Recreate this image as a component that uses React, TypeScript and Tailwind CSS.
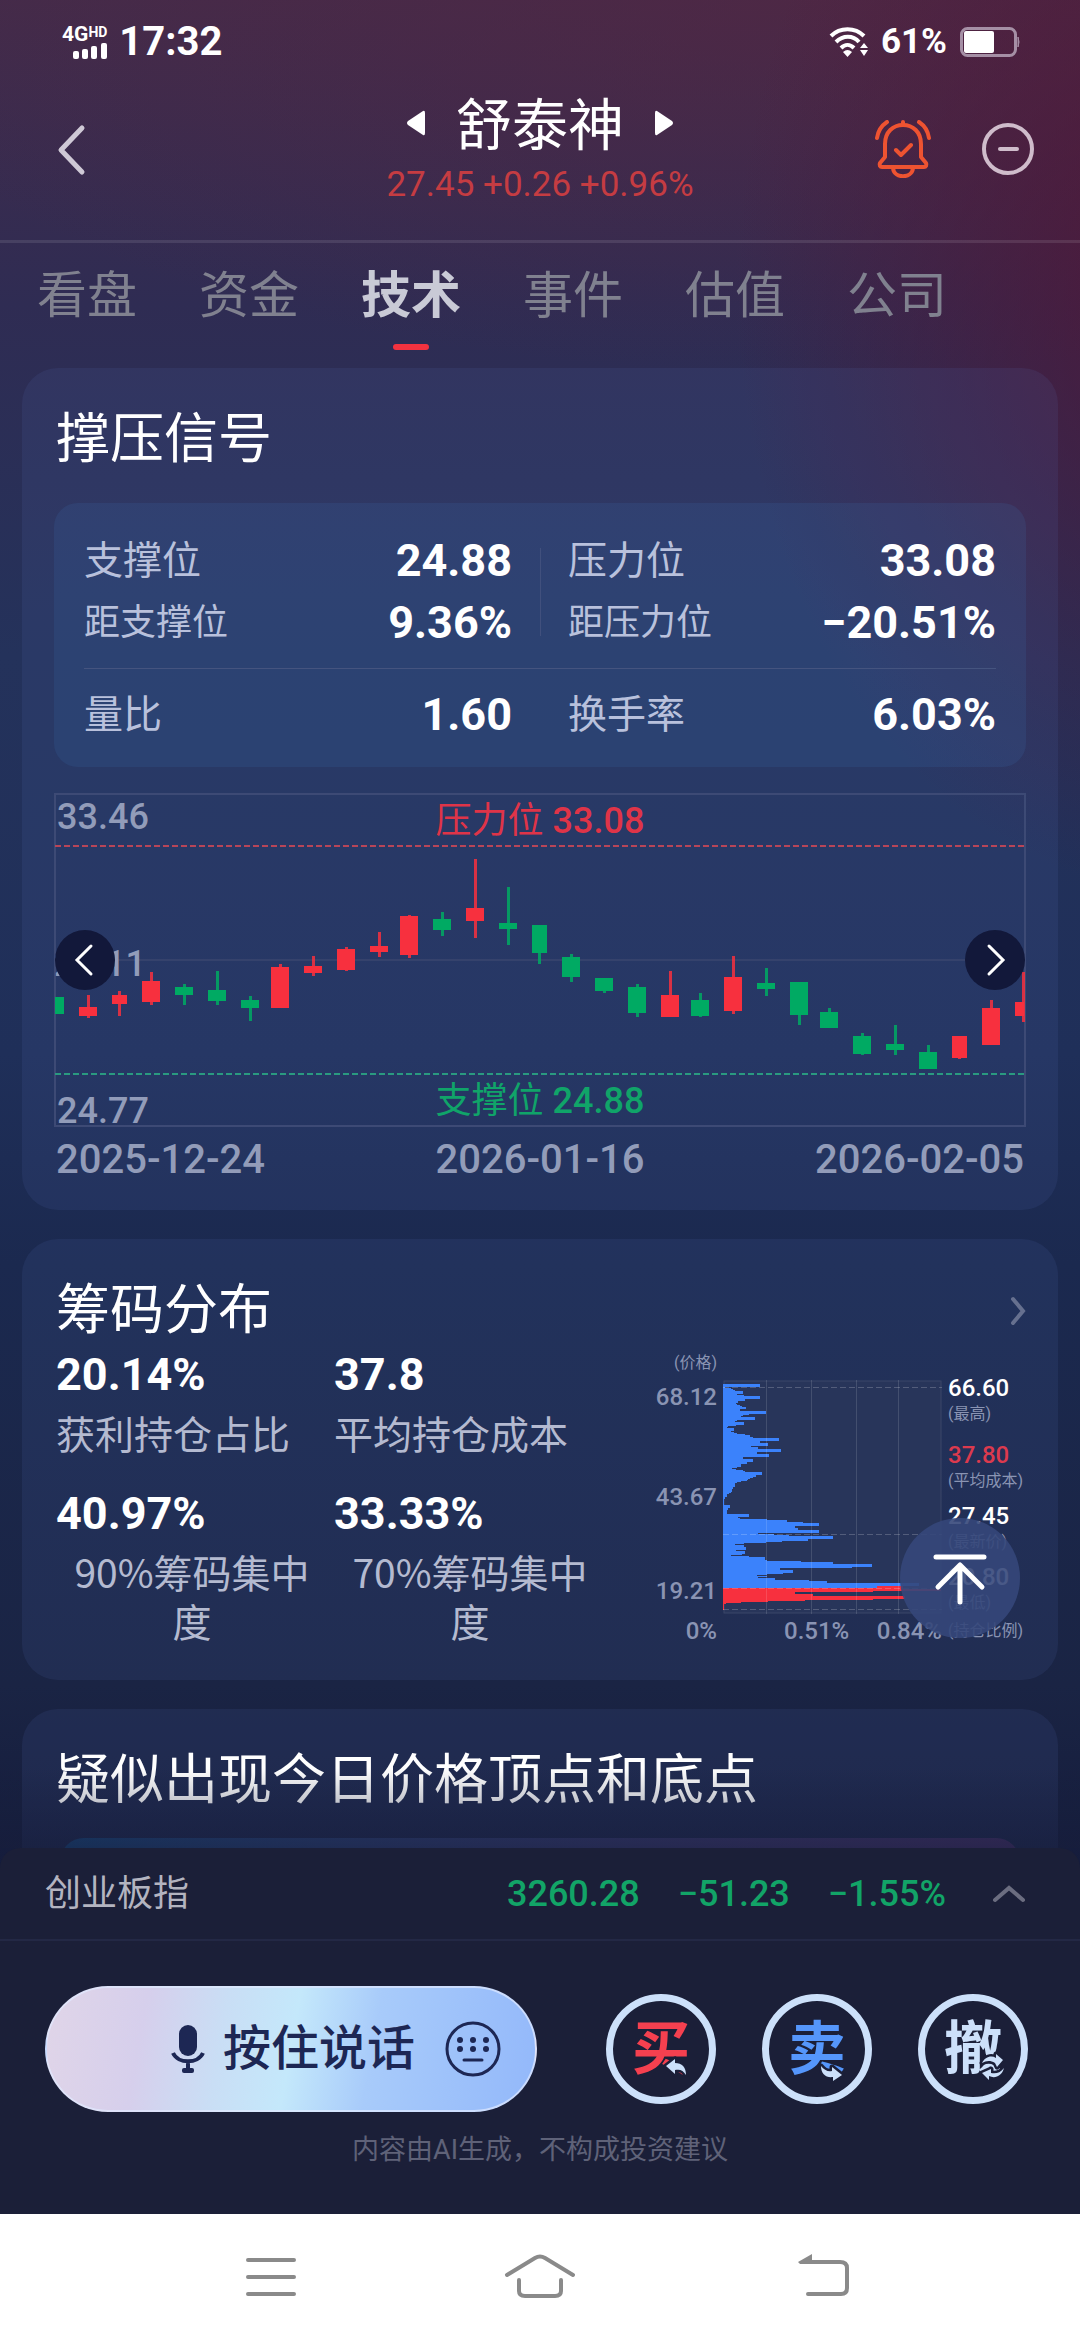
import React, { useState } from "react";

const RED = "#f7303e";
const GREEN = "#00aa63";

const tabs = ["看盘", "资金", "技术", "事件", "估值", "公司"];

// x, width, body top, body bottom, high, low, up
type Candle = [number, number, number, number, number, number, boolean];

const candles: Candle[] = [
  [1, 9, 204, 221, 204, 221, false],
  [25, 18, 214, 223, 202, 225, true],
  [58, 15, 202, 211, 198, 223, true],
  [88, 18, 188, 209, 179, 212, true],
  [121, 18, 194, 202, 191, 212, false],
  [154, 18, 197, 208, 178, 212, false],
  [187, 18, 207, 215, 203, 228, false],
  [217, 18, 174, 215, 171, 215, true],
  [250, 18, 173, 180, 163, 183, true],
  [283, 18, 156, 177, 154, 178, true],
  [316, 18, 153, 159, 139, 164, true],
  [346, 18, 123, 162, 122, 165, true],
  [379, 18, 126, 137, 119, 143, false],
  [412, 18, 115, 128, 66, 145, true],
  [445, 18, 130, 136, 94, 152, false],
  [478, 15, 132, 160, 132, 171, false],
  [508, 18, 164, 184, 161, 189, false],
  [541, 18, 185, 198, 185, 200, false],
  [574, 18, 194, 220, 191, 224, false],
  [607, 18, 202, 224, 178, 224, true],
  [637, 18, 207, 223, 200, 224, false],
  [670, 18, 184, 218, 163, 221, true],
  [703, 18, 190, 196, 175, 203, false],
  [736, 18, 189, 222, 189, 232, false],
  [766, 18, 219, 235, 215, 235, false],
  [799, 18, 243, 261, 240, 262, false],
  [832, 18, 251, 257, 232, 262, false],
  [865, 18, 259, 276, 252, 276, false],
  [898, 15, 243, 265, 243, 266, true],
  [928, 18, 215, 252, 207, 252, true],
  [961, 9, 209, 223, 179, 229, true],
];

// y, width of the bar that ends at that y
const chipsAbove: [number, number][] = [
  [4, 37], [7, 2], [8, 8], [9, 10], [10, 12], [11, 20], [14, 14], [15, 21],
  [16, 37], [19, 22], [21, 15], [23, 13], [24, 14], [25, 17], [26, 19],
  [27, 23], [29, 17], [31, 43], [34, 26], [35, 20], [36, 18], [37, 32],
  [40, 14], [41, 12], [42, 21], [45, 13], [46, 5], [47, 4], [48, 11],
  [51, 8], [52, 11], [53, 14], [54, 22], [55, 27], [57, 30], [58, 56],
  [61, 37], [63, 45], [66, 28], [67, 35], [69, 58], [72, 34], [74, 46],
  [77, 20], [79, 30], [82, 24], [84, 18], [87, 14], [88, 9], [89, 13],
  [90, 20], [91, 22], [92, 39], [95, 33], [97, 30], [98, 27], [99, 25],
  [100, 24], [101, 18], [102, 14], [103, 12], [107, 10], [109, 9], [112, 8],
  [113, 6], [114, 4], [117, 2], [119, 1], [125, 7], [128, 5], [130, 4],
  [134, 26], [137, 15], [138, 17], [139, 44], [140, 64], [142, 80],
  [143, 96], [146, 72], [148, 75], [150, 96], [153, 35], [154, 51],
  [155, 66], [156, 110], [159, 85], [161, 59], [162, 43], [163, 21],
  [164, 12], [165, 21], [167, 23], [170, 13], [171, 22], [174, 19],
  [175, 8], [176, 26], [177, 42], [180, 44], [181, 78], [182, 110],
  [184, 149], [187, 129], [188, 57], [190, 70], [193, 60], [194, 44],
  [195, 34], [196, 44], [197, 35], [198, 52], [200, 86], [201, 104],
  [203, 196], [206, 154], [208, 0],
];

const chipsBelow: [number, number][] = [
  [208, 179], [209, 218], [211, 150], [212, 72], [214, 90], [216, 182],
  [219, 150], [220, 82], [221, 45], [222, 18], [223, 3], [224, 1], [230, 0],
];

const steps = (rows: [number, number][]) =>
  `M0 ${rows[0][0]}` + rows.map(([y, w]) => `V${y}H${w}`).join("") + "H0Z";

const chipStats = [
  { value: "20.14%", label: "获利持仓占比" },
  { value: "37.8", label: "平均持仓成本" },
  { value: "40.97%", label: "90%筹码集中度" },
  { value: "33.33%", label: "70%筹码集中度" },
];

const StatusBar = () => (
  <div className="flex h-[84px] items-center justify-between pr-[60px] pl-[62px] font-bold">
    <div className="flex items-center gap-3">
      <div className="flex flex-col items-end">
        <div className="flex items-start text-[21px] leading-[17px]">
          4G<span className="text-sm leading-3">HD</span>
        </div>
        <svg viewBox="0 0 34 16" className="h-4 w-[34px] fill-white">
          <rect x="0" y="8" width="6" height="8" rx="2" />
          <rect x="9" y="6" width="6" height="10" rx="2" />
          <rect x="18" y="3" width="6" height="13" rx="2" />
          <rect x="28" y="0" width="6" height="16" rx="2" />
        </svg>
      </div>
      <span className="text-[40px]">17:32</span>
    </div>
    <div className="flex items-center gap-[13px]">
      <svg viewBox="0 0 39 30" className="h-[30px] w-[39px]">
        <g fill="none" stroke="#fff" strokeWidth="4">
          <path d="M2 9C11 0 26 0 35 9" />
          <path d="M7 15C14 8 24 8 30 15" />
          <path d="M12 21C16 17 21 17 25 21" />
        </g>
        <path d="M14 25Q18.500 21 23 25L18.500 30Z" fill="#fff" />
        <path d="M31 21L35 16L39 21ZM31 23H39L35 29Z" fill="#fff" />
      </svg>
      <span className="text-[35px]">61%</span>
      <svg viewBox="0 0 60 30" className="h-[30px] w-[60px]">
        <rect x="1.500" y="1.500" width="54" height="27" rx="6" fill="none" stroke="#a58fa5" strokeWidth="3" />
        <rect x="4" y="4" width="30" height="22" rx="2" fill="#fff" />
        <path d="M58 10Q60 15 58 20Z" fill="#a58fa5" stroke="#a58fa5" />
      </svg>
    </div>
  </div>
);

const Header = () => (
  <header className="grid h-[159px] grid-cols-[1fr_auto_1fr] items-start border-b-[3px] border-white/10">
    <button aria-label="返回" className="mt-[38px] ml-[54px] justify-self-start">
      <svg viewBox="0 0 36 56" className="h-14 w-9" fill="none" stroke="#cfc9d6" strokeWidth="5" strokeLinecap="round" strokeLinejoin="round">
        <path d="M28 6L7 28L28 50" />
      </svg>
    </button>
    <div className="flex flex-col items-center gap-[9px] pt-3">
      <div className="flex items-center gap-[31px]">
        <button aria-label="上一只" className="pb-[6px]">
          <svg viewBox="0 0 18 26" className="block h-[26px] w-[18px] fill-white">
            <path d="M16 1Q18 0 18 3V23Q18 26 16 25L1 15Q-1 13 1 11Z" />
          </svg>
        </button>
        <h1 className="text-[56px] leading-[60px]">舒泰神</h1>
        <button aria-label="下一只" className="pb-[6px]">
          <svg viewBox="0 0 18 26" className="block h-[26px] w-[18px] fill-white">
            <path d="M2 1Q0 0 0 3V23Q0 26 2 25L17 15Q19 13 17 11Z" />
          </svg>
        </button>
      </div>
      <p className="text-[35px] leading-10 text-[#c53c42]">27.45 +0.26 +0.96%</p>
    </div>
    <div className="mt-[36px] mr-[46px] flex items-center gap-[51px] justify-self-end">
      <button aria-label="预警">
        <svg viewBox="0 0 56 58" className="h-[58px] w-14" fill="none" stroke="#ee5331" strokeWidth="4" strokeLinecap="round" strokeLinejoin="round">
          <path d="M10 37V24C10 12 18 5 28 5S46 12 46 24V37L51 43C52 45 51 47 49 47H7C5 47 4 45 5 43Z" />
          <path d="M28 2V5M18 48C19 59 37 59 38 48M21 30L26 35L36 25" />
          <path d="M12 2C6 6 3 11 2 18M44 2C50 6 53 11 54 18" />
        </svg>
      </button>
      <button aria-label="移除自选">
        <svg viewBox="0 0 52 52" className="size-[52px]" fill="none" stroke="#cfbccb" strokeWidth="4" strokeLinecap="round">
          <circle cx="26" cy="26" r="24" />
          <path d="M18 26H35" />
        </svg>
      </button>
    </div>
  </header>
);

const Stat = ({ label, value, small }: { label: string; value: string; small?: boolean }) => (
  <div className="flex h-[62px] items-center justify-between">
    <span className={small ? "text-[36px] text-[#b9c1dc]" : "text-[39px] text-[#b9c1dc]"}>{label}</span>
    <span className="text-[45px] font-bold">{value}</span>
  </div>
);

const CandleChart = () => (
  <div className="relative mt-[26px] text-[36px] leading-10 font-medium text-[#929cb9]">
    <svg viewBox="0 0 972 334" className="block h-auto w-full">
      <rect x="1" y="1" width="970" height="332" fill="none" stroke="#3d4a75" strokeWidth="2" />
      <path d="M1 167H971" stroke="#35426c" strokeWidth="2" />
      <path d="M1 53H971" stroke="#b84558" strokeWidth="2" strokeDasharray="6 3" />
      <path d="M1 281H971" stroke="#2a9a80" strokeWidth="2" strokeDasharray="6 3" />
      {candles.map(([x, w, top, bottom, high, low, up], i) => {
        const wickX = i === candles.length - 1 ? 968 : x + Math.floor(w / 2) - 1;
        return (
          <g key={x} fill={up ? RED : GREEN}>
            {i > 0 && <rect x={wickX} y={high} width={3} height={low - high} opacity={0.85} />}
            <rect x={x} y={top} width={w} height={bottom - top} />
          </g>
        );
      })}
    </svg>
    <span className="absolute top-1 left-[3px]">33.46</span>
    <span className="absolute top-[151px] left-0">29.11</span>
    <span className="absolute -bottom-1 left-[3px]">24.77</span>
    <span className="absolute inset-x-0 top-2 text-center font-normal text-[#df3448]">
      压力位 <span className="font-medium">33.08</span>
    </span>
    <span className="absolute inset-x-0 bottom-[6px] text-center font-normal text-[#10a469]">
      支撑位 <span className="font-medium">24.88</span>
    </span>
    <button aria-label="向前" className="absolute top-[137px] left-px size-[60px] rounded-full bg-[#12183a]">
      <svg viewBox="0 0 60 60" fill="none" stroke="#fff" strokeWidth="3" strokeLinecap="round">
        <path d="M36 16L22 30L36 44" />
      </svg>
    </button>
    <button aria-label="向后" className="absolute top-[137px] right-px size-[60px] rounded-full bg-[#12183a]">
      <svg viewBox="0 0 60 60" fill="none" stroke="#fff" strokeWidth="3" strokeLinecap="round">
        <path d="M24 16L38 30L24 44" />
      </svg>
    </button>
  </div>
);

const PriceMark = ({ price, note, className }: { price: string; note: string; className: string }) => (
  <div className={className}>
    <p className="leading-7">{price}</p>
    <p className="text-base leading-6 font-normal text-[#8a94b3]">({note})</p>
  </div>
);

const ChipChart = () => (
  <div className="grid grid-cols-[64px_219px_78px] content-start gap-x-[6px] gap-y-[2px] text-2xl font-medium text-[#8a94b3]">
    <div className="text-right">
      <p className="text-base leading-6 font-normal">(价格)</p>
      <p className="mt-[7px] leading-[30px]">68.12</p>
      <p className="mt-[70px] leading-[30px]">43.67</p>
      <p className="mt-[64px] leading-[30px]">19.21</p>
    </div>
    <svg viewBox="0 0 219 234" className="mt-[29px] h-[234px] w-[219px]">
      <rect x="1" y="1" width="217" height="232" fill="#28355a" stroke="#3a4669" />
      <path d={steps(chipsAbove)} fill="#3b82fb" />
      <path d={steps(chipsBelow)} fill={RED} />
      <path d="M154 206H180V209H154Z" fill={RED} />
      <path d="M43.500 0V234M88.500 0V234M133.500 0V234M175.500 0V234" stroke="#fff" strokeOpacity="0.13" />
      <path d="M0 7.500H219M0 154.500H219M0 208.500H219M0 229.500H219" stroke="#fff" strokeOpacity="0.2" strokeDasharray="6 3" />
    </svg>
    <div className="pt-[23px] text-white">
      <PriceMark price="66.60" note="最高" className="" />
      <PriceMark price="37.80" note="平均成本" className="mt-[15px] text-[#dc3a4e]" />
      <PriceMark price="27.45" note="最新价" className="mt-[9px]" />
      <PriceMark price="20.80" note="最低" className="mt-[9px]" />
    </div>
    <span className="text-right leading-7">0%</span>
    <div className="flex justify-between pl-[61px] leading-7">
      <span>0.51%</span>
      <span>0.84%</span>
    </div>
    <span className="text-base leading-7 font-normal whitespace-nowrap">(持仓比例)</span>
  </div>
);

const tradeArrows = {
  买: <path d="M60 72L69 65V69C76 69 80 73 80 81C77 76 74 75 69 76V80Z" />,
  卖: <path d="M59 72C62 76 66 78 70 77V73L80 81L71 87V83C64 84 59 80 59 72Z" />,
  撤: (
    <>
      <path d="M64 69C67 63 73 61 78 64V60L85 66L79 73L77 69C72 66 68 67 64 69Z" />
      <path d="M86 74C84 82 77 85 71 82L71 86L64 79L73 75L73 79C78 80 82 79 86 74Z" />
    </>
  ),
};

const TradeButton = ({ label, color }: { label: keyof typeof tradeArrows; color: string }) => (
  <button className="relative flex size-[110px] items-center justify-center rounded-full border-[7px] border-[#cce0fa]">
    <span className={`text-[58px] leading-none font-bold ${color}`}>{label}</span>
    <svg viewBox="0 0 110 110" className="absolute -inset-[7px] fill-[#cce0fa]" aria-hidden="true">
      <g className="stroke-[#1b1f38]" strokeWidth="5" strokeLinejoin="round">{tradeArrows[label]}</g>
      {tradeArrows[label]}
    </svg>
  </button>
);

const cardClass = "rounded-[36px] bg-[#5a70be]/12";

const App = () => {
  const [active, setActive] = useState("技术");

  return (
    <div className="flex h-screen flex-col overflow-hidden bg-[radial-gradient(ellipse_40%_26%_at_108%_12%,rgba(84,20,52,0.75),transparent),radial-gradient(ellipse_90%_16%_at_75%_0%,rgba(84,38,66,0.6),transparent),linear-gradient(180deg,#432b4a_0%,#2f2c53_13%,#24325b_28%,#1f2f59_45%,#1b294f_54%,#1a2444_72%,#151c3c_80%)] font-['Roboto','Noto_Sans_CJK_SC',sans-serif] text-white">
      <StatusBar />
      <Header />

      <nav className="flex gap-[62px] pl-[37px]">
        {tabs.map((tab) => (
          <button
            key={tab}
            onClick={() => setActive(tab)}
            className={`flex flex-col items-center pt-[23px] pb-[18px] text-[50px] leading-[60px] whitespace-nowrap ${
              tab === active ? "font-bold text-[#c9cad6]" : "text-[#80818f]"
            }`}
          >
            {tab}
            <span className={`mt-[18px] h-[6px] w-9 rounded-full ${tab === active ? "bg-[#f2323f]" : ""}`} />
          </button>
        ))}
      </nav>

      <main className="relative flex min-h-0 flex-1 flex-col gap-[29px] overflow-y-auto px-[22px] [scrollbar-width:none]">
        <section className={`${cardClass} px-8 pt-[42px] pb-[30px]`}>
          <h2 className="pl-[2px] text-[54px] leading-[60px]">撑压信号</h2>
          <div className="mt-[33px] rounded-3xl bg-[#3c78be]/15 px-[30px] pt-[27px] pb-[21px]">
            <div className="grid grid-cols-2 border-b border-[#45547f] pb-[14px]">
              <div className="pr-7">
                <Stat label="支撑位" value="24.88" />
                <Stat label="距支撑位" value="9.36%" small />
              </div>
              <div className="relative pl-7">
                <span className="absolute inset-y-[18px] left-0 w-px bg-[#41507d]" />
                <Stat label="压力位" value="33.08" />
                <Stat label="距压力位" value="−20.51%" small />
              </div>
            </div>
            <div className="grid grid-cols-2 pt-[15px]">
              <div className="pr-7">
                <Stat label="量比" value="1.60" />
              </div>
              <div className="pl-7">
                <Stat label="换手率" value="6.03%" />
              </div>
            </div>
          </div>
          <CandleChart />
          <div className="mt-[13px] flex justify-between px-[2px] text-[40px] leading-10 font-medium text-[#929cb9]">
            <span>2025-12-24</span>
            <span>2026-01-16</span>
            <span>2026-02-05</span>
          </div>
        </section>

        <section className={`${cardClass} pt-[42px] pr-8 pb-[35px] pl-[34px]`}>
          <a href="#chips" className="flex items-center justify-between">
            <h2 className="text-[54px] leading-[60px]">筹码分布</h2>
            <svg viewBox="0 0 16 30" className="h-[30px] w-4" fill="none" stroke="#66708f" strokeWidth="4" strokeLinecap="round">
              <path d="M3 3L13 15L3 27" />
            </svg>
          </a>
          <div className="mt-[10px] flex justify-between">
            <div className="grid grid-cols-[272px_272px] gap-x-[6px] gap-y-[33px]">
              {chipStats.map(({ value, label }) => (
                <div key={label}>
                  <p className="text-[45px] leading-[48px] font-bold">{value}</p>
                  <p
                    className={`mt-[9px] font-['Noto_Sans_CJK_SC',sans-serif] text-[39px] leading-[49px] text-[#b4bad0] ${
                      label.includes("%") ? "text-center" : ""
                    }`}
                  >
                    {label}
                  </p>
                </div>
              ))}
            </div>
            <ChipChart />
          </div>
        </section>

        <section className={`${cardClass} shrink-0 px-[38px] pt-[42px]`}>
          <h2 className="-ml-1 text-[54px] leading-[60px]">疑似出现今日价格顶点和底点</h2>
          <div className="mt-[27px] h-[200px] rounded-3xl bg-linear-to-r from-[#15477c] to-[#462f66]" />
        </section>
      </main>

      <footer className="relative rounded-t-[20px] bg-[#1b1f38]">
        <div className="pointer-events-none absolute inset-x-0 bottom-full h-20 bg-linear-to-b from-transparent to-[#171e3c]/60" />
        <button aria-label="回到顶部" className="absolute right-[60px] bottom-[576px] size-[120px] rounded-full bg-[#35477a]/90">
          <svg viewBox="0 0 120 120" fill="none" stroke="#fff" strokeWidth="5" strokeLinecap="round" strokeLinejoin="round">
            <path d="M36 39H84M60 84V48M38 69L60 47L82 69" />
          </svg>
        </button>

        <div className="flex h-[93px] items-center border-b-2 border-[#232845] pr-[54px] pl-[45px] text-[36px]">
          <span className="text-[#b3b4c0]">创业板指</span>
          <div className="ml-auto flex gap-[38px] font-medium text-[#12a467]">
            <span>3260.28</span>
            <span>−51.23</span>
            <span>−1.55%</span>
          </div>
          <button aria-label="展开" className="ml-[46px]">
            <svg viewBox="0 0 34 18" className="h-[18px] w-[34px]" fill="none" stroke="#6b6d80" strokeWidth="4" strokeLinecap="round">
              <path d="M3 15L17 3L31 15" />
            </svg>
          </button>
        </div>

        <div className="flex items-center justify-between pt-[45px] pr-[52px] pl-[45px]">
          <button className="flex h-[126px] w-[492px] items-center rounded-full border-2 border-[#e1eaff]/70 bg-[linear-gradient(100deg,#e0d5e8_0%,#d6cfec_20%,#c9def5_36%,#c4e8fb_50%,#a8cbfa_66%,#93b8fa_100%)] pl-[124px] text-[#1d2754]">
            <svg viewBox="0 0 34 48" className="h-12 w-[34px]">
              <rect x="8" y="0" width="18" height="31" rx="9" fill="currentColor" />
              <path d="M2 28C7 39 27 39 32 28M17 36V43" fill="none" stroke="currentColor" strokeWidth="4" />
              <rect x="11" y="43" width="12" height="5" rx="2" fill="currentColor" />
            </svg>
            <span className="ml-[18px] text-[48px] leading-[60px] font-medium">按住说话</span>
            <svg viewBox="0 0 56 56" className="ml-[30px] size-14" fill="none" stroke="currentColor" strokeWidth="3">
              <circle cx="28" cy="28" r="26" />
              <path d="M19 39H37" strokeLinecap="round" />
              <g fill="currentColor" stroke="none">
                <circle cx="15" cy="19" r="3" />
                <circle cx="28" cy="19" r="3" />
                <circle cx="41" cy="19" r="3" />
                <circle cx="15" cy="28" r="3" />
                <circle cx="28" cy="28" r="3" />
                <circle cx="41" cy="28" r="3" />
              </g>
            </svg>
          </button>
          <div className="flex gap-[46px]">
            <TradeButton label="买" color="text-[#f5404f]" />
            <TradeButton label="卖" color="text-[#5596fb]" />
            <TradeButton label="撤" color="text-[#cce0fa]" />
          </div>
        </div>
        <p className="mt-[18px] pb-11 text-center text-[27px] leading-10 text-[#5f6278]">
          内容由AI生成，不构成投资建议
        </p>
      </footer>

      <div className="flex h-[126px] shrink-0 items-center justify-between bg-white px-[228px]">
        <button aria-label="最近任务">
          <svg viewBox="0 0 72 48" className="h-12 w-[72px]" fill="none" stroke="#8a8a8a" strokeWidth="4" strokeLinecap="round">
            <path d="M20 7H66M20 24H66M20 41H66" />
          </svg>
        </button>
        <button aria-label="主页">
          <svg viewBox="0 0 72 48" className="h-12 w-[72px]" fill="none" stroke="#8a8a8a" strokeWidth="4" strokeLinecap="round">
            <path d="M3 22L31 5Q36 2 41 5L69 22M15 27V38Q15 43 21 43H51Q57 43 57 38V27" />
          </svg>
        </button>
        <button aria-label="后退">
          <svg viewBox="0 0 72 48" className="h-12 w-[72px]" fill="none" stroke="#8a8a8a" strokeWidth="4" strokeLinecap="round">
            <path d="M24 9H60Q67 9 67 15V35Q67 41 61 41H28" />
            <path d="M18 9L32 1V11H20Z" fill="#8a8a8a" stroke="none" />
          </svg>
        </button>
      </div>
    </div>
  );
};

export default App;
